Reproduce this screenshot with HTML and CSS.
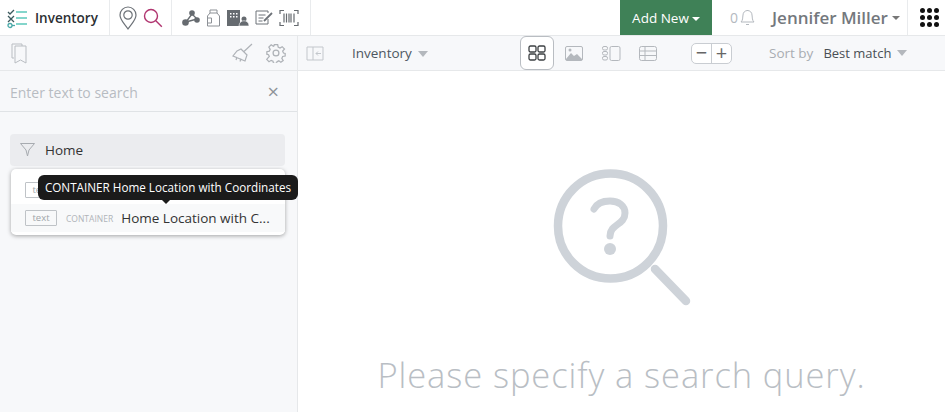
FILE: index.html
```html
<!DOCTYPE html>
<html lang="en">

<head>
    <meta charset="UTF-8">
    <meta name="viewport" content="width=device-width, initial-scale=1.0">
    <title>Inventory</title>
    <link rel="stylesheet" href="styles.css">
</head>

<body>
    <header class="top-bar">
        <div class="top-group brand">
            <svg width="22" height="22" viewBox="0 0 22 22" fill="none" stroke-width="1.3">
                <path d="M2 5l2 2 4-4" stroke="#3d5a5e" />
                <path d="M10 5h11M10 11h11M10 17h11" stroke="#5cc8bb" stroke-width="1.5" />
                <path d="M2 9l6 6M8 9l-6 6" stroke="#3d5a5e" />
                <circle cx="4" cy="18.500" r="2" stroke="#4aa9a8" />
                <path d="M6 18.500h3" stroke="#4aa9a8" />
            </svg>
            <span class="brand-name">Inventory</span>
        </div>
        <div class="top-group search-tools">
            <svg width="20" height="26" viewBox="0 0 20 26" fill="none" stroke="#6d7278" stroke-width="1.2">
                <path d="M10 24C6 18 2 15 2 10a8 8 0 0 1 16 0c0 5-4 8-8 14z" />
                <circle cx="10" cy="10" r="4.200" />
            </svg>
            <svg width="20" height="20" viewBox="0 0 20 20" fill="none" stroke="#b0346f" stroke-width="1.400">
                <circle cx="8" cy="8" r="6.500" />
                <path d="M12.800 12.800l6 6" />
            </svg>
        </div>
        <div class="top-group tools">
            <svg width="18" height="18" viewBox="0 0 18 18" fill="#666b70" stroke="#666b70">
                <path d="M10 5L4 13M10 5l5 5M4 13l11-3" fill="none" stroke-width="1.300" />
                <circle cx="10" cy="4" r="2.800" stroke="none" />
                <circle cx="3.500" cy="13.500" r="3.300" stroke="none" />
                <circle cx="15" cy="11" r="2.800" stroke="none" />
            </svg>
            <svg width="15" height="18" viewBox="0 0 15 18" fill="none" stroke="#8d9196" stroke-width="1">
                <path d="M4 1h7v3H4zM4 4L1.500 7v10h12V7L11 4M1.500 9h4v5h-4" />
            </svg>
            <svg width="22" height="18" viewBox="0 0 22 18">
                <path d="M0 1h13v16H0z" fill="#666b70" />
                <path d="M3 4h1.500v1.500H3zM6 4h1.500v1.500H6zM9 4h1.500v1.500H9zM3 7h1.500v1.500H3zM6 7h1.500v1.500H6zM9 7h1.500v1.500H9z" fill="#fff" />
                <circle cx="17" cy="10" r="2.500" fill="#666b70" />
                <path d="M12 17c0-7 10-7 10 0z" fill="#666b70" stroke="#fff" stroke-width=".6" />
            </svg>
            <svg width="18" height="16" viewBox="0 0 18 16" fill="none" stroke="#6d7278" stroke-width="1">
                <path d="M13 3V1H1v13h12V9M3.500 5h7M3.500 8h5M3.500 11h4" />
                <path d="M9 11l8-8" stroke-width="1.800" />
            </svg>
            <svg width="20" height="18" viewBox="0 0 20 18" fill="none" stroke="#666b70" stroke-width="1.200">
                <path d="M1 5V1.500h4M15 1.500h4V5M19 13v3.500h-4M5 16.500H1V13" />
                <path d="M5 4.500v9M7.500 4.500v9M10 4.500v9M12 4.500v9M15 4.500v9" />
            </svg>
        </div>
        <div class="top-spacer"></div>
        <button class="add-new">Add New<span class="caret"></span></button>
        <div class="notify">
            <span>0</span>
            <svg width="15" height="17" viewBox="0 0 15 17" fill="none" stroke="#b4b9bf" stroke-width="1">
                <path d="M1 13c2-2 1.500-4 2-7a4 4 0 0 1 9 0c.5 3 0 5 2 7zM6 15.500h3M7.500 1v1" />
            </svg>
        </div>
        <div class="user">Jennifer Miller<span class="caret caret-grey"></span></div>
        <div class="apps">
            <i></i><i></i><i></i><i></i><i></i><i></i><i></i><i></i><i></i>
        </div>
    </header>

    <div class="content">
        <aside class="sidebar">
            <div class="side-toolbar">
                <svg width="16" height="21" viewBox="0 0 16 21" fill="none" stroke="#b9bdc2" stroke-width="1">
                    <path d="M1 1h10v2M1 1v14h2M4 3h11v17l-5.500-3L4 20z" />
                </svg>
                <div class="side-tools">
                    <svg width="21" height="21" viewBox="0 0 21 21" fill="none" stroke="#aeb2b7" stroke-width="1.200">
                        <path d="M20 1l-8 7.500M9 6l6 6-2 6-12-5 4-5zM5 14l-1 3M9 15.500l-1 3" />
                    </svg>
                    <svg width="20" height="20" viewBox="0 0 24 24" fill="none" stroke="#aeb2b7" stroke-width="1.500">
                        <circle cx="12" cy="12" r="3.500" />
                        <path d="M10 2h4l.6 3 2.200 1 2.600-1.600 2.800 2.800L20 9.800l1 2.200 2 .6v3l-3 .6-1 2.200 1.600 2.600-2.800 2-2.400-1.600-2.200 1-.6 2h-3.600l-.6-2.600-2.200-1-2.600 1.600-2.800-2.800L4 16.200l-1-2.200-2-.6v-3l3-.6 1-2.200-1.600-2.600 2.800-2.800L8.800 4l.6-.4z" />
                    </svg>
                </div>
            </div>
            <div class="search-row">
                <span class="search-hint">Enter text to search</span>
                <span class="search-clear">×</span>
            </div>
            <div class="filter-area">
                <div class="filter-box">
                    <svg width="15" height="14" viewBox="0 0 15 14" fill="none" stroke="#a7abb0" stroke-width="1">
                        <path d="M.5.500h14L9 7v0L7.500 13 6 7z" />
                    </svg>
                    <span>Home</span>
                </div>
                <div class="result-list">
                    <div class="result-row">
                        <span class="type-tag">text</span>
                        <span class="type-name">CONTAINER</span>
                        <span class="result-name">Home Location</span>
                    </div>
                    <div class="result-row is-hover">
                        <span class="type-tag">text</span>
                        <span class="type-name">CONTAINER</span>
                        <span class="result-name">Home Location with C...</span>
                    </div>
                    <div class="tooltip">CONTAINER Home Location with Coordinates</div>
                </div>
            </div>
        </aside>

        <main class="main">
            <div class="main-toolbar">
                <svg class="collapse-icon" width="18" height="15" viewBox="0 0 18 15" fill="none" stroke="#c3c7cc" stroke-width="1">
                    <path d="M1 1h16v13H1zM7 1v13M15 7.500h-5M12 5.500l-2 2 2 2" />
                </svg>
                <div class="crumb">Inventory<span class="caret caret-light"></span></div>
                <div class="view-switch">
                    <div class="view-btn is-active">
                        <svg width="18" height="16" viewBox="0 0 18 16" fill="none" stroke="#3c4043" stroke-width="1.300">
                            <rect x="1" y="1" width="7" height="6" rx="1.500" />
                            <rect x="10" y="1" width="7" height="6" rx="1.500" />
                            <rect x="1" y="9" width="7" height="6" rx="1.500" />
                            <rect x="10" y="9" width="7" height="6" rx="1.500" />
                        </svg>
                    </div>
                    <div class="view-btn">
                        <svg width="18" height="15" viewBox="0 0 18 15">
                            <rect x=".5" y=".5" width="17" height="14" rx="1.500" fill="none" stroke="#b4b8bd" />
                            <path d="M1 13l5-6 3 3 3-2 5 5v1H1z" fill="#b4b8bd" />
                            <circle cx="5" cy="4" r="1.500" fill="#b4b8bd" />
                        </svg>
                    </div>
                    <div class="view-btn">
                        <svg width="19" height="15" viewBox="0 0 19 15" fill="none" stroke="#b4b8bd" stroke-width="1">
                            <rect x=".5" y=".5" width="5" height="3.500" rx="1.500" />
                            <rect x=".5" y="5.500" width="5" height="3.500" rx="1.500" />
                            <rect x=".5" y="10.500" width="5" height="3.500" rx="1.500" />
                            <rect x="8" y=".5" width="10" height="14" rx="1.500" />
                        </svg>
                    </div>
                    <div class="view-btn">
                        <svg width="18" height="15" viewBox="0 0 18 15" fill="none" stroke="#b4b8bd" stroke-width="1">
                            <rect x=".5" y=".5" width="17" height="14" rx="2" />
                            <path d="M.5 5h17M.5 9.500h17M6 .5v14" />
                        </svg>
                    </div>
                </div>
                <div class="zoom-ctrl">
                    <span>−</span>
                    <span>+</span>
                </div>
                <div class="sort">
                    <span class="sort-label">Sort by</span>
                    <span class="sort-value">Best match</span>
                    <span class="caret caret-light"></span>
                </div>
            </div>
            <div class="empty">
                <svg width="142" height="142" viewBox="0 0 142 142" fill="none" stroke="#ced3d9">
                    <circle cx="59.500" cy="58" r="52.500" stroke-width="8.500" />
                    <path d="M104 101l31 32" stroke-width="8.500" stroke-linecap="round" />
                    <path d="M43 41c3-6 9-8 16-8 9 0 15 5 15 12 0 12-15 11-15 23" stroke-width="7" stroke-linecap="round" />
                    <circle cx="59" cy="81" r="6" fill="#ced3d9" stroke="none" />
                </svg>
                <p class="empty-text">Please specify a search query.</p>
            </div>
        </main>
    </div>
</body>

</html>
```

FILE: styles.css
```css
* {
    box-sizing: border-box;
}

body {
    margin: 0;
    height: 412px;
    overflow: hidden;
    background-color: #fff;
    font-family: "Open Sans", "Noto Sans", sans-serif;
    color: #333;
}

svg {
    display: block;
    flex: none;
}

/* top bar */
.top-bar {
    display: flex;
    align-items: stretch;
    height: 36px;
    border-bottom: 1px solid #e6e8ea;
}

.top-group {
    display: flex;
    align-items: center;
    gap: 6px;
    padding: 0 10px;
    border-right: 1px solid #e9ebed;
}

.brand {
    width: 110px;
    padding: 0 0 0 6px;
    gap: 7px;
}

.brand-name {
    font-size: 13.500px;
    font-weight: 600;
    color: #2b2f33;
}

.search-tools {
    width: 62px;
    padding: 0 0 0 8px;
    gap: 5px;
}

.tools {
    width: 139px;
    padding: 0 0 0 10px;
    gap: 6px;
}

.top-spacer {
    flex: 1;
}

.add-new {
    width: 92px;
    height: 35px;
    padding: 0;
    border: none;
    background-color: #3f8157;
    color: #fff;
    font-family: inherit;
    font-size: 13.500px;
}

.caret {
    display: inline-block;
    margin-left: 3px;
    vertical-align: middle;
    border-top: 4px solid #fff;
    border-left: 4px solid transparent;
    border-right: 4px solid transparent;
}

.caret-grey {
    margin-left: 4px;
    border-top-color: #777;
}

.caret-light {
    margin-left: 6px;
    border-top: 6px solid #b4b8bd;
    border-left: 5px solid transparent;
    border-right: 5px solid transparent;
}

.notify {
    display: flex;
    align-items: center;
    gap: 2px;
    width: 60px;
    padding-left: 18px;
    font-size: 14px;
    color: #b4b9bf;
}

.user {
    display: flex;
    align-items: center;
    width: 136px;
    font-size: 17px;
    font-weight: 600;
    white-space: nowrap;
    color: #74787d;
    border-right: 1px solid #e9ebed;
}

.apps {
    display: grid;
    grid-template-columns: repeat(3, 5px);
    gap: 2px;
    align-content: center;
    justify-content: center;
    width: 37px;
    padding-left: 5px;
}

.apps i {
    width: 5px;
    height: 5px;
    border-radius: 50%;
    background-color: #111;
}

/* page body */
.content {
    display: flex;
    height: 376px;
}

.sidebar {
    width: 298px;
    background-color: #f7f8fa;
    border-right: 1px solid #e6e8ea;
}

.side-toolbar {
    display: flex;
    align-items: center;
    justify-content: space-between;
    height: 35px;
    padding: 0 11px 0 11px;
    border-bottom: 1px solid #e6e8ea;
}

.side-tools {
    display: flex;
    align-items: center;
    gap: 13px;
}

.search-row {
    display: flex;
    align-items: center;
    justify-content: space-between;
    height: 41px;
    padding: 2px 18px 0 10px;
    border-bottom: 1px solid #e0e3e6;
}

.search-hint {
    font-size: 14px;
    color: #b7bcc2;
}

.search-clear {
    font-size: 20px;
    line-height: 20px;
    color: #8f9499;
}

.filter-area {
    padding: 22px 12px 0 10px;
}

.filter-box {
    display: flex;
    align-items: center;
    gap: 10px;
    height: 32px;
    padding-left: 10px;
    background-color: #ebecef;
    border-radius: 4px;
    font-size: 13.500px;
}

.result-list {
    position: relative;
    margin: 3px 0 0 1px;
    padding: 7px 0 3px;
    background-color: #fff;
    border-radius: 5px;
    box-shadow: 0 1px 4px rgba(0, 0, 0, 0.35);
}

.result-row {
    display: flex;
    align-items: center;
    height: 28px;
    padding-left: 14px;
}

.result-row.is-hover {
    background-color: #f8f9fa;
}

.type-tag {
    width: 32px;
    height: 16px;
    line-height: 14px;
    text-align: center;
    font-size: 9.500px;
    color: #a0a4a9;
    border: 1px solid #bfc3c7;
    border-radius: 1px;
}

.type-name {
    margin-left: 9px;
    font-size: 8.500px;
    color: #b0b4b9;
}

.result-name {
    margin-left: 8px;
    font-size: 13.500px;
    white-space: nowrap;
}

.tooltip {
    position: absolute;
    top: 6px;
    left: 27px;
    width: 260px;
    height: 25px;
    line-height: 25px;
    text-align: center;
    font-size: 11.700px;
    white-space: nowrap;
    color: #fff;
    background-color: #1b1b1b;
    border-radius: 6px;
}

.tooltip::after {
    content: "";
    position: absolute;
    top: 25px;
    left: 124px;
    border-top: 4px solid #1b1b1b;
    border-left: 4px solid transparent;
    border-right: 4px solid transparent;
}

/* main area */
.main {
    flex: 1;
    min-width: 0;
}

.main-toolbar {
    display: flex;
    align-items: center;
    height: 35px;
    padding-left: 8px;
    background-color: #f7f8fa;
    border-bottom: 1px solid #e6e8ea;
}

.crumb {
    width: 196px;
    padding-left: 28px;
    font-size: 13.500px;
    color: #4d5761;
}

.view-switch {
    display: flex;
    align-items: center;
    gap: 3px;
}

.view-btn {
    display: flex;
    align-items: center;
    justify-content: center;
    width: 34px;
    height: 34px;
    border: 1px solid transparent;
}

.view-btn.is-active {
    background-color: #fff;
    border-color: #b9bdc2;
    border-radius: 6px;
}

.zoom-ctrl {
    display: flex;
    margin-left: 26px;
    width: 41px;
    height: 21px;
    border: 1px solid #c9cdd2;
    border-radius: 5px;
    background-color: #fff;
    font-size: 20px;
    line-height: 18px;
    color: #666;
}

.zoom-ctrl span {
    flex: 1;
    text-align: center;
}

.zoom-ctrl span:first-child {
    border-right: 1px solid #c9cdd2;
}

.sort {
    display: flex;
    align-items: center;
    margin-left: 37px;
    font-size: 13.500px;
}

.sort-label {
    color: #a9adb2;
}

.sort-value {
    margin-left: 10px;
    font-size: 13px;
    color: #4a4f55;
}

.empty {
    display: flex;
    flex-direction: column;
    align-items: center;
    padding-top: 97px;
}

.empty-text {
    margin: 42px 0 0;
    font-size: 34.500px;
    font-weight: 300;
    letter-spacing: 0.9px;
    line-height: 46px;
    color: #b9bec4;
    white-space: nowrap;
}
```
